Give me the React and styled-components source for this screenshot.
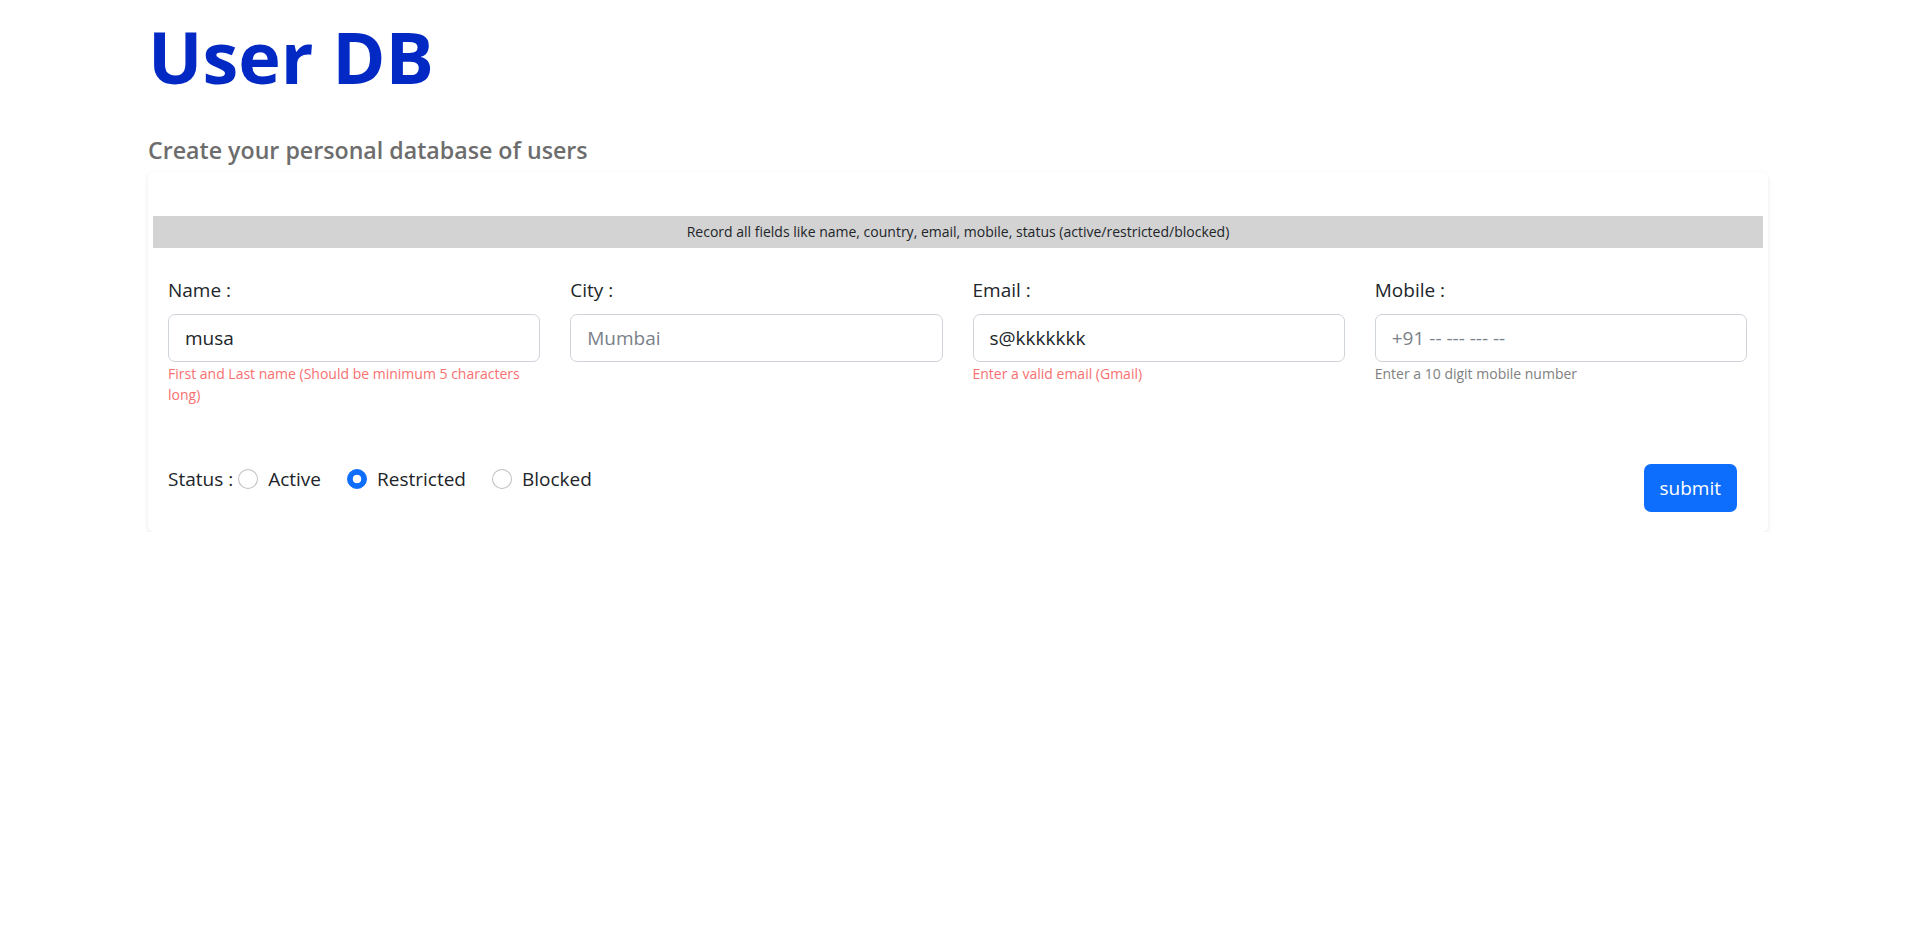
import { useState } from "react";
import styled, { createGlobalStyle } from "styled-components";

const GlobalStyle = createGlobalStyle`
  * {
    box-sizing: border-box;
  }
  body {
    margin: 0;
    background: #fff;
    color: #212529;
    font-family: "Open Sans", "Noto Sans", sans-serif;
  }
`;

const fields = [
  {
    name: "name",
    label: "Name :",
    value: "musa",
    placeholder: "",
    hint: "First and Last name (Should be minimum 5 characters long)",
    error: true,
  },
  { name: "city", label: "City :", value: "", placeholder: "Mumbai" },
  {
    name: "email",
    label: "Email :",
    value: "s@kkkkkkk",
    placeholder: "",
    hint: "Enter a valid email (Gmail)",
    error: true,
  },
  {
    name: "mobile",
    label: "Mobile :",
    value: "",
    placeholder: "+91 -- --- --- --",
    hint: "Enter a 10 digit mobile number",
  },
];

const statuses = ["Active", "Restricted", "Blocked"];

function App() {
  const [values, setValues] = useState(() =>
    Object.fromEntries(fields.map((f) => [f.name, f.value]))
  );
  const [status, setStatus] = useState("Restricted");

  const onChange = (e) => {
    setValues({ ...values, [e.target.name]: e.target.value });
  };

  return (
    <Page>
      <GlobalStyle />
      <Title>User DB</Title>
      <Subtitle>Create your personal database of users</Subtitle>
      <Card>
        <Banner>
          Record all fields like name, country, email, mobile, status
          (active/restricted/blocked)
        </Banner>
        <Form onSubmit={(e) => e.preventDefault()}>
          <Fields>
            {fields.map((field) => (
              <Field key={field.name}>
                <Label htmlFor={field.name}>{field.label}</Label>
                <Input
                  id={field.name}
                  name={field.name}
                  value={values[field.name]}
                  placeholder={field.placeholder}
                  onChange={onChange}
                />
                {field.hint && <Hint $error={field.error}>{field.hint}</Hint>}
              </Field>
            ))}
          </Fields>
          <Footer>
            <StatusGroup>
              <StatusLabel>Status :</StatusLabel>
              {statuses.map((s) => (
                <Option key={s}>
                  <Radio
                    type="radio"
                    name="status"
                    checked={status === s}
                    onChange={() => setStatus(s)}
                  />
                  {s}
                </Option>
              ))}
            </StatusGroup>
            <Submit type="submit">submit</Submit>
          </Footer>
        </Form>
      </Card>
    </Page>
  );
}

export default App;

const Page = styled.div`
  padding: 13px 149px 0 148px;
`;

const Title = styled.h1`
  margin: 0;
  font-size: 72px;
  font-weight: 700;
  line-height: 1.2;
  color: #0329c5;
`;

const Subtitle = styled.h4`
  margin: 38px 0 7px;
  font-size: 23.2px;
  font-weight: 600;
  line-height: 1.2;
  color: #6d6d6d;
`;

const Card = styled.div`
  padding: 44px 5px 20px;
  border-radius: 6px;
  background: #fff;
  box-shadow: 0 2px 5px rgba(0, 0, 0, 0.09);
`;

const Banner = styled.div`
  height: 32px;
  line-height: 32px;
  background: #d3d3d3;
  text-align: center;
  font-size: 14px;
  color: #212529;
`;

const Form = styled.form`
  padding: 27px 16px 0 15px;
`;

const Fields = styled.div`
  display: grid;
  grid-template-columns: repeat(4, 1fr);
  column-gap: 30px;
`;

const Field = styled.div`
  display: flex;
  flex-direction: column;
`;

const Label = styled.label`
  margin-bottom: 9px;
  font-size: 19px;
  line-height: 30px;
`;

const Input = styled.input`
  height: 48px;
  padding: 0 16px;
  border: 1px solid #ced4da;
  border-radius: 7px;
  font-family: inherit;
  font-size: 19px;
  color: #212529;
  outline: none;

  &::placeholder {
    color: #7a8189;
  }
`;

const Hint = styled.div`
  margin-top: 1px;
  font-size: 14px;
  line-height: 21px;
  color: ${({ $error }) => ($error ? "#f87070" : "#808080")};
`;

const Footer = styled.div`
  display: flex;
  justify-content: space-between;
  align-items: flex-start;
  margin-top: 59px;
  padding-right: 10px;
`;

const StatusGroup = styled.div`
  display: flex;
  align-items: center;
  height: 30px;
  font-size: 19px;
`;

const StatusLabel = styled.span`
  margin-right: 5px;
`;

const Option = styled.label`
  display: flex;
  align-items: center;
  gap: 10px;
  margin-right: 26px;
`;

const Radio = styled.input`
  appearance: none;
  width: 20px;
  height: 20px;
  margin: 0;
  border: 1px solid rgba(0, 0, 0, 0.25);
  border-radius: 50%;
  background: #fff;

  &:checked {
    border-color: #0d6efd;
    background: radial-gradient(circle, #fff 0 4px, #0d6efd 4.6px);
  }
`;

const Submit = styled.button`
  height: 48px;
  padding: 0 16px;
  border: none;
  border-radius: 7px;
  background: #0d6efd;
  font-family: inherit;
  font-size: 19px;
  color: #fff;
`;
